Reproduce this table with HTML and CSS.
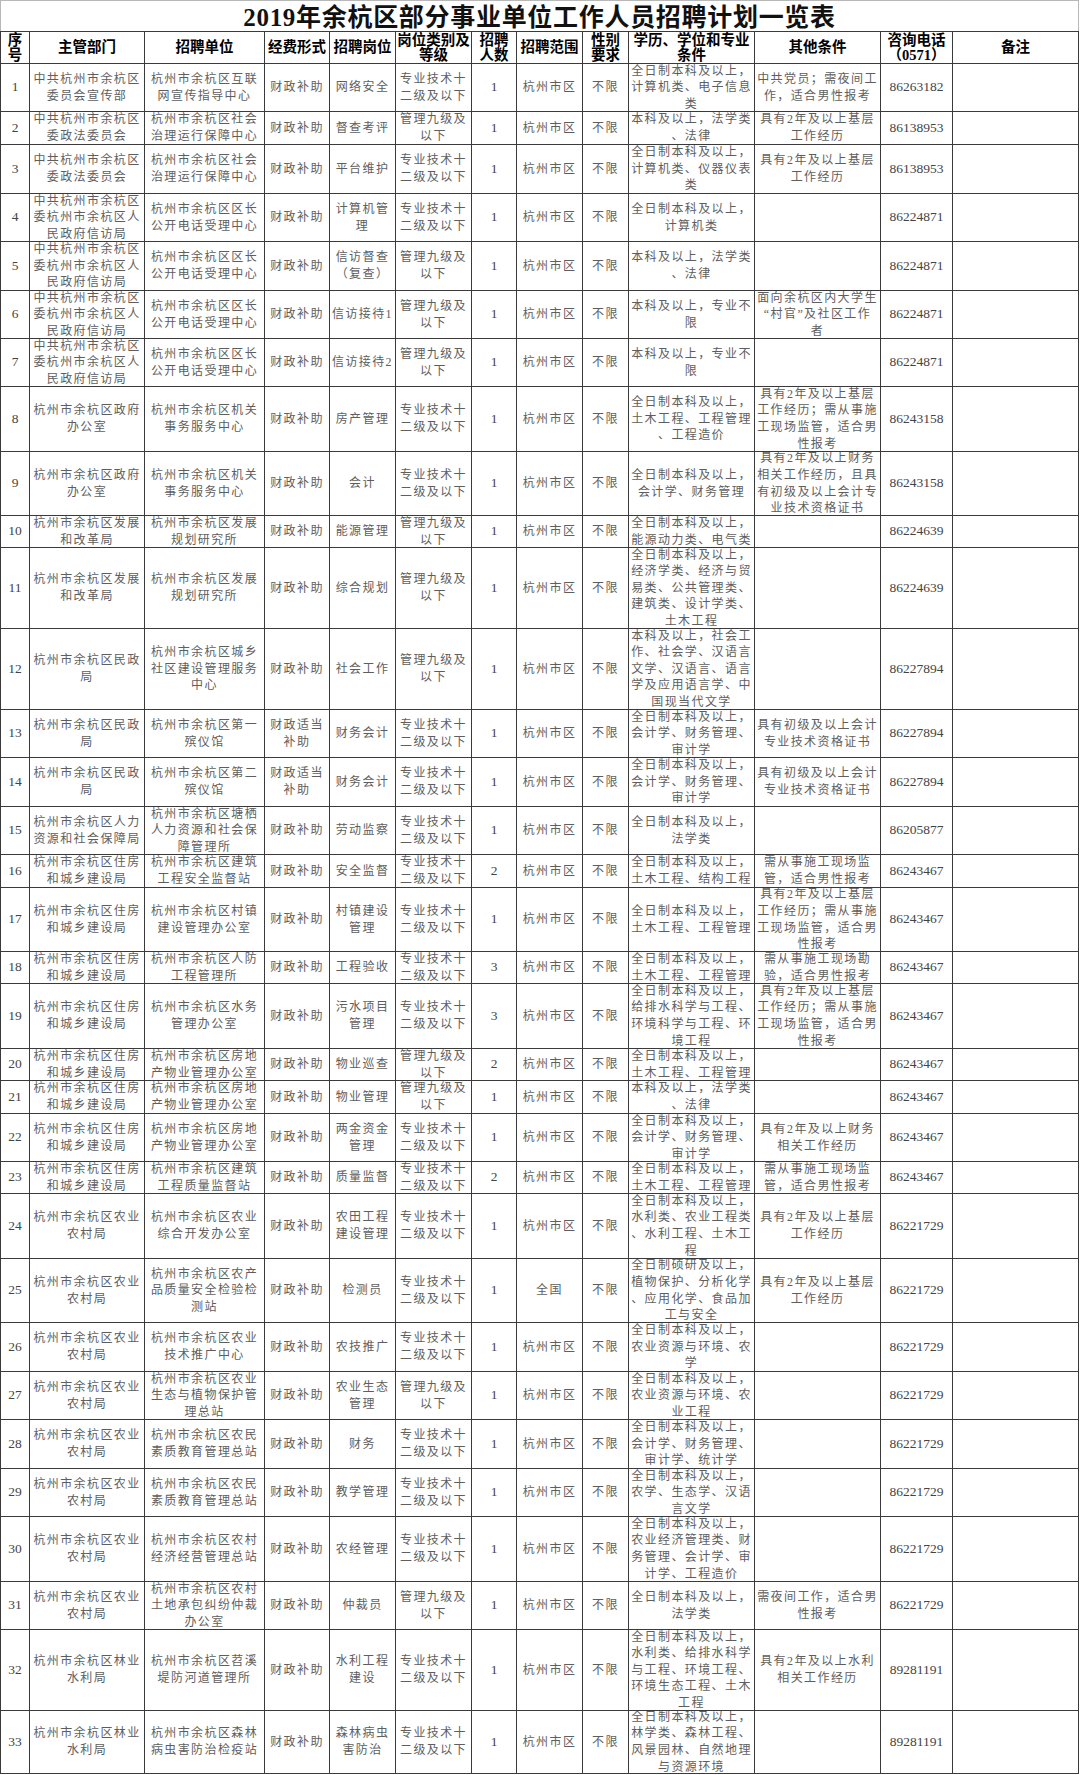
FILE: index.html
```html
<!DOCTYPE html>
<html lang="zh-CN">
<head>
<meta charset="utf-8">
<title>2019年余杭区部分事业单位工作人员招聘计划一览表</title>
<link rel="stylesheet" href="styles.css">
</head>
<body>
<div class="sheet">
  <div class="title">2019年余杭区部分事业单位工作人员招聘计划一览表</div>
  <div class="grid">
    <div class="h">序<br>号</div><div class="h">主管部门</div><div class="h">招聘单位</div><div class="h">经费形式</div><div class="h">招聘岗位</div><div class="h">岗位类别及<br>等级</div><div class="h">招聘<br>人数</div><div class="h">招聘范围</div><div class="h">性别<br>要求</div><div class="h">学历、学位和专业<br>条件</div><div class="h">其他条件</div><div class="h">咨询电话<br>（0571）</div><div class="h">备注</div>

    <div class="n">1</div><div>中共杭州市余杭区<br>委员会宣传部</div><div>杭州市余杭区互联<br>网宣传指导中心</div><div>财政补助</div><div>网络安全</div><div>专业技术十<br>二级及以下</div><div class="n">1</div><div>杭州市区</div><div>不限</div><div>全日制本科及以上，<br>计算机类、电子信息<br>类</div><div>中共党员；需夜间工<br>作，适合男性报考</div><div class="n">86263182</div><div></div>

    <div class="n">2</div><div>中共杭州市余杭区<br>委政法委员会</div><div>杭州市余杭区社会<br>治理运行保障中心</div><div>财政补助</div><div>督查考评</div><div>管理九级及<br>以下</div><div class="n">1</div><div>杭州市区</div><div>不限</div><div>本科及以上，法学类<br>、法律</div><div>具有2年及以上基层<br>工作经历</div><div class="n">86138953</div><div></div>

    <div class="n">3</div><div>中共杭州市余杭区<br>委政法委员会</div><div>杭州市余杭区社会<br>治理运行保障中心</div><div>财政补助</div><div>平台维护</div><div>专业技术十<br>二级及以下</div><div class="n">1</div><div>杭州市区</div><div>不限</div><div>全日制本科及以上，<br>计算机类、仪器仪表<br>类</div><div>具有2年及以上基层<br>工作经历</div><div class="n">86138953</div><div></div>

    <div class="n">4</div><div>中共杭州市余杭区<br>委杭州市余杭区人<br>民政府信访局</div><div>杭州市余杭区区长<br>公开电话受理中心</div><div>财政补助</div><div>计算机管<br>理</div><div>专业技术十<br>二级及以下</div><div class="n">1</div><div>杭州市区</div><div>不限</div><div>全日制本科及以上，<br>计算机类</div><div></div><div class="n">86224871</div><div></div>

    <div class="n">5</div><div>中共杭州市余杭区<br>委杭州市余杭区人<br>民政府信访局</div><div>杭州市余杭区区长<br>公开电话受理中心</div><div>财政补助</div><div>信访督查<br>（复查）</div><div>管理九级及<br>以下</div><div class="n">1</div><div>杭州市区</div><div>不限</div><div>本科及以上，法学类<br>、法律</div><div></div><div class="n">86224871</div><div></div>

    <div class="n">6</div><div>中共杭州市余杭区<br>委杭州市余杭区人<br>民政府信访局</div><div>杭州市余杭区区长<br>公开电话受理中心</div><div>财政补助</div><div>信访接待1</div><div>管理九级及<br>以下</div><div class="n">1</div><div>杭州市区</div><div>不限</div><div>本科及以上，专业不<br>限</div><div>面向余杭区内大学生<br>“村官”及社区工作<br>者</div><div class="n">86224871</div><div></div>

    <div class="n">7</div><div>中共杭州市余杭区<br>委杭州市余杭区人<br>民政府信访局</div><div>杭州市余杭区区长<br>公开电话受理中心</div><div>财政补助</div><div>信访接待2</div><div>管理九级及<br>以下</div><div class="n">1</div><div>杭州市区</div><div>不限</div><div>本科及以上，专业不<br>限</div><div></div><div class="n">86224871</div><div></div>

    <div class="n">8</div><div>杭州市余杭区政府<br>办公室</div><div>杭州市余杭区机关<br>事务服务中心</div><div>财政补助</div><div>房产管理</div><div>专业技术十<br>二级及以下</div><div class="n">1</div><div>杭州市区</div><div>不限</div><div>全日制本科及以上，<br>土木工程、工程管理<br>、工程造价</div><div>具有2年及以上基层<br>工作经历；需从事施<br>工现场监管，适合男<br>性报考</div><div class="n">86243158</div><div></div>

    <div class="n">9</div><div>杭州市余杭区政府<br>办公室</div><div>杭州市余杭区机关<br>事务服务中心</div><div>财政补助</div><div>会计</div><div>专业技术十<br>二级及以下</div><div class="n">1</div><div>杭州市区</div><div>不限</div><div>全日制本科及以上，<br>会计学、财务管理</div><div>具有2年及以上财务<br>相关工作经历，且具<br>有初级及以上会计专<br>业技术资格证书</div><div class="n">86243158</div><div></div>

    <div class="n">10</div><div>杭州市余杭区发展<br>和改革局</div><div>杭州市余杭区发展<br>规划研究所</div><div>财政补助</div><div>能源管理</div><div>管理九级及<br>以下</div><div class="n">1</div><div>杭州市区</div><div>不限</div><div>全日制本科及以上，<br>能源动力类、电气类</div><div></div><div class="n">86224639</div><div></div>

    <div class="n">11</div><div>杭州市余杭区发展<br>和改革局</div><div>杭州市余杭区发展<br>规划研究所</div><div>财政补助</div><div>综合规划</div><div>管理九级及<br>以下</div><div class="n">1</div><div>杭州市区</div><div>不限</div><div>全日制本科及以上，<br>经济学类、经济与贸<br>易类、公共管理类、<br>建筑类、设计学类、<br>土木工程</div><div></div><div class="n">86224639</div><div></div>

    <div class="n">12</div><div>杭州市余杭区民政<br>局</div><div>杭州市余杭区城乡<br>社区建设管理服务<br>中心</div><div>财政补助</div><div>社会工作</div><div>管理九级及<br>以下</div><div class="n">1</div><div>杭州市区</div><div>不限</div><div>本科及以上，社会工<br>作、社会学、汉语言<br>文学、汉语言、语言<br>学及应用语言学、中<br>国现当代文学</div><div></div><div class="n">86227894</div><div></div>

    <div class="n">13</div><div>杭州市余杭区民政<br>局</div><div>杭州市余杭区第一<br>殡仪馆</div><div>财政适当<br>补助</div><div>财务会计</div><div>专业技术十<br>二级及以下</div><div class="n">1</div><div>杭州市区</div><div>不限</div><div>全日制本科及以上，<br>会计学、财务管理、<br>审计学</div><div>具有初级及以上会计<br>专业技术资格证书</div><div class="n">86227894</div><div></div>

    <div class="n">14</div><div>杭州市余杭区民政<br>局</div><div>杭州市余杭区第二<br>殡仪馆</div><div>财政适当<br>补助</div><div>财务会计</div><div>专业技术十<br>二级及以下</div><div class="n">1</div><div>杭州市区</div><div>不限</div><div>全日制本科及以上，<br>会计学、财务管理、<br>审计学</div><div>具有初级及以上会计<br>专业技术资格证书</div><div class="n">86227894</div><div></div>

    <div class="n">15</div><div>杭州市余杭区人力<br>资源和社会保障局</div><div>杭州市余杭区塘栖<br>人力资源和社会保<br>障管理所</div><div>财政补助</div><div>劳动监察</div><div>专业技术十<br>二级及以下</div><div class="n">1</div><div>杭州市区</div><div>不限</div><div>全日制本科及以上，<br>法学类</div><div></div><div class="n">86205877</div><div></div>

    <div class="n">16</div><div>杭州市余杭区住房<br>和城乡建设局</div><div>杭州市余杭区建筑<br>工程安全监督站</div><div>财政补助</div><div>安全监督</div><div>专业技术十<br>二级及以下</div><div class="n">2</div><div>杭州市区</div><div>不限</div><div>全日制本科及以上，<br>土木工程、结构工程</div><div>需从事施工现场监<br>管，适合男性报考</div><div class="n">86243467</div><div></div>

    <div class="n">17</div><div>杭州市余杭区住房<br>和城乡建设局</div><div>杭州市余杭区村镇<br>建设管理办公室</div><div>财政补助</div><div>村镇建设<br>管理</div><div>专业技术十<br>二级及以下</div><div class="n">1</div><div>杭州市区</div><div>不限</div><div>全日制本科及以上，<br>土木工程、工程管理</div><div>具有2年及以上基层<br>工作经历；需从事施<br>工现场监管，适合男<br>性报考</div><div class="n">86243467</div><div></div>

    <div class="n">18</div><div>杭州市余杭区住房<br>和城乡建设局</div><div>杭州市余杭区人防<br>工程管理所</div><div>财政补助</div><div>工程验收</div><div>专业技术十<br>二级及以下</div><div class="n">3</div><div>杭州市区</div><div>不限</div><div>全日制本科及以上，<br>土木工程、工程管理</div><div>需从事施工现场勘<br>验，适合男性报考</div><div class="n">86243467</div><div></div>

    <div class="n">19</div><div>杭州市余杭区住房<br>和城乡建设局</div><div>杭州市余杭区水务<br>管理办公室</div><div>财政补助</div><div>污水项目<br>管理</div><div>专业技术十<br>二级及以下</div><div class="n">3</div><div>杭州市区</div><div>不限</div><div>全日制本科及以上，<br>给排水科学与工程、<br>环境科学与工程、环<br>境工程</div><div>具有2年及以上基层<br>工作经历；需从事施<br>工现场监管，适合男<br>性报考</div><div class="n">86243467</div><div></div>

    <div class="n">20</div><div>杭州市余杭区住房<br>和城乡建设局</div><div>杭州市余杭区房地<br>产物业管理办公室</div><div>财政补助</div><div>物业巡查</div><div>管理九级及<br>以下</div><div class="n">2</div><div>杭州市区</div><div>不限</div><div>全日制本科及以上，<br>土木工程、工程管理</div><div></div><div class="n">86243467</div><div></div>

    <div class="n">21</div><div>杭州市余杭区住房<br>和城乡建设局</div><div>杭州市余杭区房地<br>产物业管理办公室</div><div>财政补助</div><div>物业管理</div><div>管理九级及<br>以下</div><div class="n">1</div><div>杭州市区</div><div>不限</div><div>本科及以上，法学类<br>、法律</div><div></div><div class="n">86243467</div><div></div>

    <div class="n">22</div><div>杭州市余杭区住房<br>和城乡建设局</div><div>杭州市余杭区房地<br>产物业管理办公室</div><div>财政补助</div><div>两金资金<br>管理</div><div>专业技术十<br>二级及以下</div><div class="n">1</div><div>杭州市区</div><div>不限</div><div>全日制本科及以上，<br>会计学、财务管理、<br>审计学</div><div>具有2年及以上财务<br>相关工作经历</div><div class="n">86243467</div><div></div>

    <div class="n">23</div><div>杭州市余杭区住房<br>和城乡建设局</div><div>杭州市余杭区建筑<br>工程质量监督站</div><div>财政补助</div><div>质量监督</div><div>专业技术十<br>二级及以下</div><div class="n">2</div><div>杭州市区</div><div>不限</div><div>全日制本科及以上，<br>土木工程、工程管理</div><div>需从事施工现场监<br>管，适合男性报考</div><div class="n">86243467</div><div></div>

    <div class="n">24</div><div>杭州市余杭区农业<br>农村局</div><div>杭州市余杭区农业<br>综合开发办公室</div><div>财政补助</div><div>农田工程<br>建设管理</div><div>专业技术十<br>二级及以下</div><div class="n">1</div><div>杭州市区</div><div>不限</div><div>全日制本科及以上，<br>水利类、农业工程类<br>、水利工程、土木工<br>程</div><div>具有2年及以上基层<br>工作经历</div><div class="n">86221729</div><div></div>

    <div class="n">25</div><div>杭州市余杭区农业<br>农村局</div><div>杭州市余杭区农产<br>品质量安全检验检<br>测站</div><div>财政补助</div><div>检测员</div><div>专业技术十<br>二级及以下</div><div class="n">1</div><div>全国</div><div>不限</div><div>全日制硕研及以上，<br>植物保护、分析化学<br>、应用化学、食品加<br>工与安全</div><div>具有2年及以上基层<br>工作经历</div><div class="n">86221729</div><div></div>

    <div class="n">26</div><div>杭州市余杭区农业<br>农村局</div><div>杭州市余杭区农业<br>技术推广中心</div><div>财政补助</div><div>农技推广</div><div>专业技术十<br>二级及以下</div><div class="n">1</div><div>杭州市区</div><div>不限</div><div>全日制本科及以上，<br>农业资源与环境、农<br>学</div><div></div><div class="n">86221729</div><div></div>

    <div class="n">27</div><div>杭州市余杭区农业<br>农村局</div><div>杭州市余杭区农业<br>生态与植物保护管<br>理总站</div><div>财政补助</div><div>农业生态<br>管理</div><div>管理九级及<br>以下</div><div class="n">1</div><div>杭州市区</div><div>不限</div><div>全日制本科及以上，<br>农业资源与环境、农<br>业工程</div><div></div><div class="n">86221729</div><div></div>

    <div class="n">28</div><div>杭州市余杭区农业<br>农村局</div><div>杭州市余杭区农民<br>素质教育管理总站</div><div>财政补助</div><div>财务</div><div>专业技术十<br>二级及以下</div><div class="n">1</div><div>杭州市区</div><div>不限</div><div>全日制本科及以上，<br>会计学、财务管理、<br>审计学、统计学</div><div></div><div class="n">86221729</div><div></div>

    <div class="n">29</div><div>杭州市余杭区农业<br>农村局</div><div>杭州市余杭区农民<br>素质教育管理总站</div><div>财政补助</div><div>教学管理</div><div>专业技术十<br>二级及以下</div><div class="n">1</div><div>杭州市区</div><div>不限</div><div>全日制本科及以上，<br>农学、生态学、汉语<br>言文学</div><div></div><div class="n">86221729</div><div></div>

    <div class="n">30</div><div>杭州市余杭区农业<br>农村局</div><div>杭州市余杭区农村<br>经济经营管理总站</div><div>财政补助</div><div>农经管理</div><div>专业技术十<br>二级及以下</div><div class="n">1</div><div>杭州市区</div><div>不限</div><div>全日制本科及以上，<br>农业经济管理类、财<br>务管理、会计学、审<br>计学、工程造价</div><div></div><div class="n">86221729</div><div></div>

    <div class="n">31</div><div>杭州市余杭区农业<br>农村局</div><div>杭州市余杭区农村<br>土地承包纠纷仲裁<br>办公室</div><div>财政补助</div><div>仲裁员</div><div>管理九级及<br>以下</div><div class="n">1</div><div>杭州市区</div><div>不限</div><div>全日制本科及以上，<br>法学类</div><div>需夜间工作，适合男<br>性报考</div><div class="n">86221729</div><div></div>

    <div class="n">32</div><div>杭州市余杭区林业<br>水利局</div><div>杭州市余杭区苕溪<br>堤防河道管理所</div><div>财政补助</div><div>水利工程<br>建设</div><div>专业技术十<br>二级及以下</div><div class="n">1</div><div>杭州市区</div><div>不限</div><div>全日制本科及以上，<br>水利类、给排水科学<br>与工程、环境工程、<br>环境生态工程、土木<br>工程</div><div>具有2年及以上水利<br>相关工作经历</div><div class="n">89281191</div><div></div>

    <div class="n">33</div><div>杭州市余杭区林业<br>水利局</div><div>杭州市余杭区森林<br>病虫害防治检疫站</div><div>财政补助</div><div>森林病虫<br>害防治</div><div>专业技术十<br>二级及以下</div><div class="n">1</div><div>杭州市区</div><div>不限</div><div>全日制本科及以上，<br>林学类、森林工程、<br>风景园林、自然地理<br>与资源环境</div><div></div><div class="n">89281191</div><div></div>
  </div>
</div>
</body>
</html>
```

FILE: styles.css
```css
html, body {
  margin: 0;
  padding: 0;
  background: #ffffff;
}

.sheet {
  width: 1079px;
}

.title {
  box-sizing: border-box;
  width: 1079px;
  height: 31px;
  padding-top: 3px;
  border: 1px solid #b8b8b8;
  border-bottom: 0;
  text-align: center;
  font-family: "Liberation Serif", "Noto Sans CJK SC", serif;
  font-weight: bold;
  font-size: 25px;
  line-height: 28px;
  letter-spacing: 0.7px;
  color: #111111;
  white-space: nowrap;
  overflow: hidden;
}

.grid {
  display: grid;
  grid-template-columns: 28px 114px 119px 64px 65px 75px 44px 65px 45px 125px 125px 71px 125px;
  grid-template-rows:
    31px
    47px 32px 48px 47px 48px 47px 47px 64px 63px 31px
    80px 80px 47px 48px 47px 32px 63px 31px 64px 31px
    32px 47px 31px 64px 63px 48px 47px 48px 47px 64px
    47px 80px 62px;
  gap: 1px;
  padding: 1px;
  width: 1077px;
  background: #3a3a3a;
}

.grid > div {
  background: #ffffff;
  display: flex;
  align-items: center;
  justify-content: center;
  text-align: center;
  overflow: hidden;
  white-space: nowrap;
  font-family: "Liberation Serif", "Noto Sans CJK SC", serif;
  font-size: 12px;
  line-height: 16.6px;
  letter-spacing: 1.4px;
  color: #5e5e5e;
}

.grid > .h {
  font-weight: bold;
  font-size: 14.5px;
  line-height: 15px;
  letter-spacing: 0;
  color: #000000;
}

.grid > .n {
  font-size: 13.5px;
  letter-spacing: 0;
  color: #444444;
}
```
